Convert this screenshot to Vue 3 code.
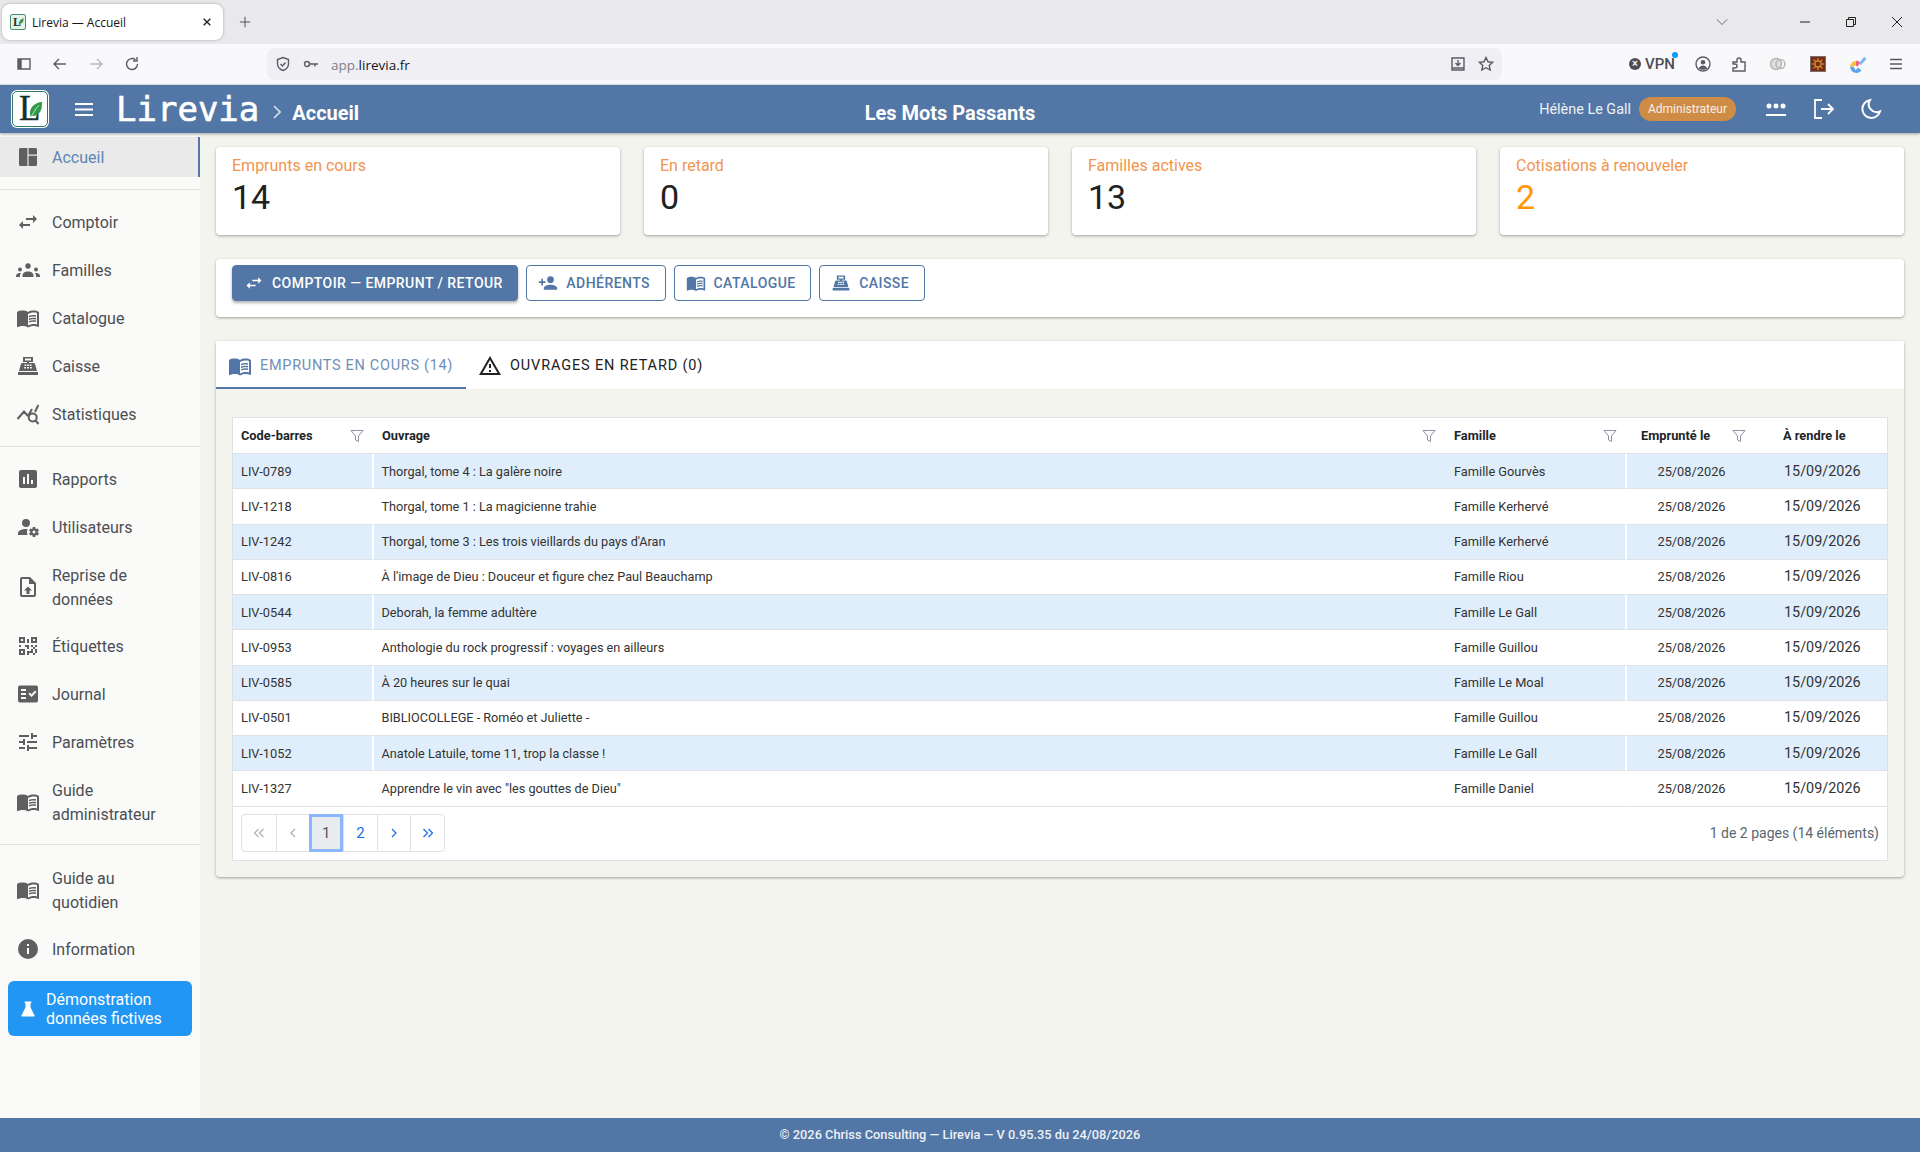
<template>
  <div class="page">
    <div class="tabstrip">
      <div class="tab">
        <span class="favicon"><b>L</b><svg viewBox="0 0 20 24"><path d="M2 23C2 12 8 3 19 1c1 10-3 18-12 19l-3 3z" /></svg></span>
        <span class="tab-title">Lirevia — Accueil</span>
        <svg class="tab-close" viewBox="0 0 12 12"><path d="M2 2l8 8M10 2l-8 8" /></svg>
      </div>
      <svg class="new-tab" viewBox="0 0 14 14"><path d="M7 1v12M1 7h12" /></svg>
      <div class="strip-right">
        <svg class="win chev" viewBox="0 0 14 14"><path d="M1 4l6 6 6-6" /></svg>
        <svg class="win" viewBox="0 0 12 12"><path d="M1 6h10" /></svg>
        <svg class="win" viewBox="0 0 12 12"><path d="M1.5 3.5h7v7h-7zM3.5 3.5v-2h7v7h-2" /></svg>
        <svg class="win" viewBox="0 0 12 12"><path d="M1 1l10 10M11 1L1 11" /></svg>
      </div>
    </div>

    <div class="toolbar">
      <svg class="tool" viewBox="0 0 16 16"><path d="M2 3h12v10H2zM5 3v10" /><path class="solid" d="M2 3h3v10H2z" /></svg>
      <svg class="tool" viewBox="0 0 16 16"><path d="M14 8H2M7 3L2 8l5 5" /></svg>
      <svg class="tool faint" viewBox="0 0 16 16"><path d="M2 8h12M9 3l5 5-5 5" /></svg>
      <svg class="tool" viewBox="0 0 16 16"><path d="M13.5 8A5.5 5.5 0 1 1 11.5 3.8M13 1v4H9" /></svg>
      <div class="urlbar">
        <svg class="tool" viewBox="0 0 16 16"><path d="M8 1.5l5.5 2v4c0 3.5-2.5 6-5.5 7-3-1-5.500-3.500-5.500-7v-4zM5.500 8l2 2 3-3.500" /></svg>
        <svg class="tool key" viewBox="0 0 16 16"><circle cx="4" cy="8" r="2.500" /><path d="M6.500 8H15M12 8v2.500" /></svg>
        <span class="url"><i>app.</i>lirevia.fr</span>
        <span class="url-fill"></span>
        <svg class="tool" viewBox="0 0 16 16"><path d="M2 12V2h12v10zM2 12v2h12v-2M8 4v5M5.500 7L8 9.500 10.500 7" /></svg>
        <svg class="tool star" viewBox="0 0 16 16"><path d="M8 1.500l2 4.300 4.600.5-3.400 3.100 1 4.600L8 11.700l-4.200 2.300 1-4.600L1.400 6.300 6 5.800z" /></svg>
      </div>
      <div class="vpn">
        <span class="vpn-dot">×</span><span>VPN</span><span class="vpn-badge"></span>
      </div>
      <svg class="tool ext" viewBox="0 0 16 16"><circle cx="8" cy="8" r="7" /><circle cx="8" cy="6.200" r="2.300" class="solid" /><path class="solid" d="M3.800 12.500c.8-2 2.400-3 4.200-3s3.400 1 4.200 3c-2 1.800-6.400 1.800-8.400 0z" /></svg>
      <svg class="tool ext puzzle" viewBox="0 0 16 16"><path d="M2 6h4V4a2 2 0 0 1 4 0v2h4v9H2v-3h2a2 2 0 0 0 0-4H2z" /></svg>
      <svg class="tool ext pale" viewBox="0 0 16 16"><circle class="solid" cx="6" cy="8" r="5.500" /><circle cx="6" cy="8" r="5.500" /><circle cx="10.500" cy="8" r="4.500" /></svg>
      <span class="brown"><svg viewBox="0 0 16 16"><circle cx="8" cy="8" r="3.500" /><path d="M8 1v3M8 12v3M1 8h3M12 8h3M3 3l2 2M11 11l2 2M13 3l-2 2M5 11l-2 2" /></svg></span>
      <svg class="colorful" viewBox="0 0 16 16">
        <path fill="#f6c445" d="M1 10.500a5.500 5.500 0 0 1 5.500-5.500L7 8l-3 2.500z" />
        <path fill="#ee5d7c" d="M6.500 5c1.500 0 2.500.5 3.500 1.500L8 10l-2-.5z" />
        <path fill="#5aa9ec" d="M1 10.500A5.500 5.500 0 0 0 6.500 16c2 0 3.500-1 4.500-2.500L8 11l-2 2.500-2-3z" />
        <path fill="#7db7f0" d="M9 7l4.500-5.500 2 2L10.500 9z" />
      </svg>
      <svg class="tool ext menu" viewBox="0 0 16 16"><path d="M2 3.500h12M2 8h12M2 12.500h12" /></svg>
    </div>

    <header class="appbar">
      <div class="brand">
        <span class="logo">
          <b>L</b>
          <svg class="leaf" viewBox="0 0 20 24"><path d="M3 22C0 12 6 3 19 1c1 11-3 20-13 20z" /><path class="vein" d="M4 22C8 15 11 10 15 6" /></svg>
        </span>
        <svg class="burger" viewBox="0 0 18 13"><path d="M0 1h18M0 6.500h18M0 12h18" /></svg>
        <span class="wordmark">Lirevia</span>
        <svg class="crumb" viewBox="0 0 8 14"><path d="M1 1l6 6-6 6" /></svg>
        <span class="page-name">Accueil</span>
      </div>
      <div class="org">Les Mots Passants</div>
      <div class="user">
        <span class="user-name">Hélène Le Gall</span>
        <span class="role">Administrateur</span>
        <svg class="bar-icon pass" viewBox="0 0 22 16"><g><circle cx="4" cy="5" r="2.500" /><circle cx="11" cy="5" r="2.500" /><circle cx="18" cy="5" r="2.500" /></g><path d="M1 14h20" /></svg>
        <svg class="bar-icon out" viewBox="0 0 22 22"><path d="M9 2H2v18h7M8 11h12M15 6l5 5-5 5" /></svg>
        <svg class="bar-icon moon" viewBox="0 0 22 22"><path d="M10 2a9 9 0 1 0 10 11.500A8 8 0 0 1 10 2z" /></svg>
      </div>
    </header>

    <div class="body">
      <aside class="sidebar">
        <template v-for="item in nav" :key="item.label">
          <div v-if="item.sep" class="sep" :class="item.sep"></div>
          <div class="nav-item" :class="{ active: item.active, wrap: item.label.length > 16 }">
            <svg class="nav-icon" :class="{ stroked: item.icon === 'stats' }" viewBox="0 0 24 24"><path :d="icons[item.icon]" fill-rule="evenodd" /></svg>
            <span>{{ item.label }}</span>
          </div>
        </template>
        <div class="demo">
          <svg viewBox="0 0 24 24"><path d="M8 3h8v2h-1v5l5 10a1 1 0 0 1-1 1H5a1 1 0 0 1-1-1l5-10V5H8z" /></svg>
          <span>Démonstration<br />données fictives</span>
        </div>
      </aside>

      <main class="main">
        <section class="cards">
          <div v-for="c in cards" :key="c.label" class="card">
            <div class="card-label">{{ c.label }}</div>
            <div class="card-value" :class="{ warn: c.warn }">{{ c.value }}</div>
          </div>
        </section>

        <section class="actions">
          <button class="btn primary"><svg viewBox="0 0 24 24"><path :d="icons.swap" /></svg>Comptoir — Emprunt / Retour</button>
          <button class="btn"><svg viewBox="0 0 24 24"><path :d="icons.adduser" /></svg>Adhérents</button>
          <button class="btn"><svg viewBox="0 0 24 24"><path :d="icons.book" /></svg>Catalogue</button>
          <button class="btn"><svg viewBox="0 0 24 24"><path :d="icons.cash" /></svg>Caisse</button>
        </section>

        <section class="panel">
          <div class="tabs">
            <div class="tabitem current"><svg viewBox="0 0 24 24"><path :d="icons.book" /></svg>Emprunts en cours (14)</div>
            <div class="tabitem"><svg viewBox="0 0 24 24"><path :d="icons.alert" /></svg>Ouvrages en retard (0)</div>
          </div>

          <div class="table-wrap">
            <table>
              <colgroup>
                <col class="c1" />
                <col class="c2" />
                <col class="c3" />
                <col class="c4" />
                <col />
              </colgroup>
              <thead>
                <tr>
                  <th v-for="h in headers" :key="h.label" :class="h.cls">
                    <div class="th-in">
                      <span>{{ h.label }}</span>
                      <svg v-if="h.filter" class="funnel" viewBox="0 0 14 14"><path d="M1 1.500h12L8.500 7v5.500l-3-1.500V7z" /></svg>
                    </div>
                  </th>
                </tr>
              </thead>
              <tbody>
                <tr v-for="r in rows" :key="r[0]">
                  <td class="sep-r">{{ r[0] }}</td>
                  <td class="title">{{ r[1] }}</td>
                  <td class="sep-r">{{ r[2] }}</td>
                  <td class="date">25/08/2026</td>
                  <td class="due">15/09/2026</td>
                </tr>
              </tbody>
            </table>
            <div class="pager-row">
              <div class="pager">
                <span class="pg off"><svg viewBox="0 0 12 10"><path d="M5.500 1L1.500 5l4 4M10.500 1L6.500 5l4 4" /></svg></span>
                <span class="pg off"><svg viewBox="0 0 12 10"><path d="M8 1L4 5l4 4" /></svg></span>
                <span class="pg on">1</span>
                <span class="pg">2</span>
                <span class="pg"><svg viewBox="0 0 12 10"><path d="M4 1l4 4-4 4" /></svg></span>
                <span class="pg"><svg viewBox="0 0 12 10"><path d="M1.500 1l4 4-4 4M6.500 1l4 4-4 4" /></svg></span>
              </div>
              <span class="pager-info">1 de 2 pages (14 éléments)</span>
            </div>
          </div>
        </section>
      </main>
    </div>

    <footer class="footer">© 2026 Chriss Consulting — Lirevia — V 0.95.35 du 24/08/2026</footer>
  </div>
</template>

<script setup>
const book = 'M21,5C19.89,4.65 18.67,4.5 17.5,4.5C15.55,4.5 13.45,4.9 12,6C10.55,4.9 8.45,4.5 6.5,4.5C4.55,4.5 2.45,4.9 1,6V20.65C1,20.9 1.25,21.15 1.5,21.15C1.6,21.15 1.65,21.1 1.75,21.1C3.1,20.45 5.05,20 6.5,20C8.45,20 10.55,20.4 12,21.5C13.35,20.65 15.8,20 17.5,20C19.15,20 20.85,20.3 22.25,21.05C22.35,21.1 22.4,21.1 22.5,21.1C22.75,21.1 23,20.85 23,20.6V6C22.4,5.55 21.75,5.25 21,5M21,18.5C19.9,18.15 18.7,18 17.5,18C15.8,18 13.35,18.65 12,19.5V8C13.35,7.15 15.8,6.5 17.5,6.5C18.7,6.5 19.9,6.65 21,7V18.5ZM17.5,10.5C18.38,10.5 19.23,10.59 20,10.76V9.24C19.21,9.09 18.36,9 17.5,9C15.8,9 14.26,9.29 13,9.83V11.49C14.13,10.85 15.7,10.5 17.5,10.5M13,12.49V14.15C14.13,13.51 15.7,13.16 17.5,13.16C18.38,13.16 19.23,13.25 20,13.42V11.9C19.21,11.75 18.36,11.66 17.5,11.66C15.8,11.66 14.26,11.96 13,12.49M17.5,14.33C15.8,14.33 14.26,14.62 13,15.16V16.82C14.13,16.18 15.7,15.83 17.5,15.83C18.38,15.83 19.23,15.92 20,16.09V14.57C19.21,14.41 18.36,14.33 17.5,14.33Z'

const icons = {
  book,
  dash: 'M3 4.500A1.500 1.500 0 0 1 4.500 3H11.400v18H4.500A1.500 1.500 0 0 1 3 19.500zM12.600 3h6.900A1.500 1.500 0 0 1 21 4.500V9.500h-8.400zM12.600 10.700H21v8.800a1.500 1.500 0 0 1-1.500 1.500H12.600z',
  swap: 'M21,9L17,5V8H10V10H17V13M7,11L3,15L7,19V16H14V14H7V11Z',
  group: 'M12 5.300a2.700 2.700 0 1 1 0 5.400a2.700 2.700 0 0 1 0-5.400zM4 9.500a2 2 0 1 1 0 4a2 2 0 0 1 0-4zM20 9.500a2 2 0 1 1 0 4a2 2 0 0 1 0-4zM6.500 19v-1.500c0-2.500 2.500-4 5.500-4s5.500 1.500 5.500 4V19zM0 19v-1c0-1.800 1.800-3 4-3 .4 0 .8 0 1.100.1-.7.8-1.100 1.800-1.100 2.900V19zM24 19v-1c0-1.800-1.800-3-4-3-.4 0-.8 0-1.100.1.700.8 1.100 1.800 1.100 2.900V19z',
  cash: 'M7 3h10v5h-4v1h4.500c.8 0 1.400.5 1.600 1.200L21 17H3l1.900-6.800C5.100 9.500 5.700 9 6.500 9H11V8H7zM9 4.500v2h6v-2zM2 18h20v3H2zM8.500 10.500v1.500h1.800v-1.500zM11.100 10.500v1.500h1.800v-1.500zM13.700 10.500v1.500h1.800v-1.500zM8.200 13v1.500h1.800V13zM11.100 13v1.500h1.800V13zM14 13v1.500h1.800V13z',
  stats: 'M1.500 17l6.500-7.500 4 4.500M12 14l4-7M19 10l3.300-7M16.700 11.500a4 4 0 1 0 0 8a4 4 0 0 0 0-8zM19.500 18.500l3 3.500',
  chart: 'M19,3H5C3.9,3 3,3.9 3,5V19C3,20.1 3.9,21 5,21H19C20.1,21 21,20.1 21,19V5C21,3.9 20.1,3 19,3M9,17H7V10H9V17M13,17H11V7H13V17M17,17H15V13H17V17Z',
  usercog: 'M10 4A4 4 0 0 0 6 8A4 4 0 0 0 10 12A4 4 0 0 0 14 8A4 4 0 0 0 10 4M17 12C16.87 12 16.76 12.09 16.74 12.21L16.55 13.53C16.25 13.66 15.96 13.82 15.7 14L14.46 13.5C14.35 13.5 14.22 13.5 14.15 13.63L13.15 15.36C13.09 15.47 13.11 15.6 13.21 15.68L14.27 16.5C14.25 16.67 14.24 16.83 14.24 17C14.24 17.17 14.25 17.33 14.27 17.5L13.21 18.32C13.12 18.4 13.09 18.53 13.15 18.64L14.15 20.37C14.21 20.5 14.34 20.5 14.46 20.5L15.7 20C15.96 20.18 16.24 20.35 16.55 20.47L16.74 21.79C16.76 21.91 16.86 22 17 22H19C19.11 22 19.22 21.91 19.24 21.79L19.43 20.47C19.73 20.34 20 20.18 20.27 20L21.5 20.5C21.63 20.5 21.76 20.5 21.83 20.37L22.83 18.64C22.89 18.53 22.86 18.4 22.77 18.32L21.7 17.5C21.72 17.33 21.74 17.17 21.74 17C21.74 16.83 21.73 16.67 21.7 16.5L22.76 15.68C22.85 15.6 22.88 15.47 22.82 15.36L21.82 13.63C21.76 13.5 21.63 13.5 21.5 13.5L20.27 14C20 13.82 19.73 13.65 19.42 13.53L19.23 12.21C19.22 12.09 19.11 12 19 12H17M10 14C5.58 14 2 15.79 2 18V20H11.68A7 7 0 0 1 11 17A7 7 0 0 1 11.64 14.09C11.11 14.03 10.56 14 10 14M18 15.5C18.83 15.5 19.5 16.17 19.5 17C19.5 17.83 18.83 18.5 18 18.5C17.16 18.5 16.5 17.83 16.5 17C16.5 16.17 17.17 15.5 18 15.5Z',
  upload: 'M14,2H6A2,2 0 0,0 4,4V20A2,2 0 0,0 6,22H18A2,2 0 0,0 20,20V8L14,2M18,20H6V4H13V9H18V20ZM12,11.500L16,15.500H13.500V19H10.500V15.500H8Z',
  qr: 'M3,11H5V13H3V11M11,5H13V9H11V5M9,11H13V15H11V13H9V11M15,11H17V13H19V11H21V13H19V15H21V19H19V21H17V19H13V21H11V17H15V15H17V13H15V11M19,19V15H17V19H19M15,3H21V9H15V3M17,5V7H19V5H17M3,3H9V9H3V3M5,5V7H7V5H5M3,15H9V21H3V15M5,17V19H7V17H5Z',
  journal: 'M4 3.500h16a2 2 0 0 1 2 2v13a2 2 0 0 1-2 2H4a2 2 0 0 1-2-2v-13a2 2 0 0 1 2-2zM5 7v2h5V7zM5 11v2h5v-2zM5 15v2h5v-2zM12.500 12l1.400-1.400 1.600 1.600 3.600-3.600 1.400 1.400-5 5z',
  tune: 'M3,17V19H9V17H3M3,5V7H13V5H3M13,21V19H21V17H13V15H11V21H13M7,9V11H3V13H7V15H9V9H7M21,13V11H11V13H21M15,9H17V7H21V5H17V3H15V9Z',
  info: 'M12,2A10,10 0 0,0 2,12A10,10 0 0,0 12,22A10,10 0 0,0 22,12A10,10 0 0,0 12,2ZM13,9H11V7H13ZM13,17H11V11H13Z',
  adduser: 'M15,14C12.33,14 7,15.33 7,18V20H23V18C23,15.33 17.67,14 15,14M6,10V7H4V10H1V12H4V15H6V12H9V10M15,12A4,4 0 0,0 19,8A4,4 0 0,0 15,4A4,4 0 0,0 11,8A4,4 0 0,0 15,12Z',
  alert: 'M12,2L1,21H23M12,6L19.53,19H4.47M11,10V14H13V10M11,16V18H13V16',
}

const nav = [
  { label: 'Accueil', icon: 'dash', active: true },
  { label: 'Comptoir', icon: 'swap', sep: 'first' },
  { label: 'Familles', icon: 'group' },
  { label: 'Catalogue', icon: 'book' },
  { label: 'Caisse', icon: 'cash' },
  { label: 'Statistiques', icon: 'stats' },
  { label: 'Rapports', icon: 'chart', sep: 'mid' },
  { label: 'Utilisateurs', icon: 'usercog' },
  { label: 'Reprise de données', icon: 'upload' },
  { label: 'Étiquettes', icon: 'qr' },
  { label: 'Journal', icon: 'journal' },
  { label: 'Paramètres', icon: 'tune' },
  { label: 'Guide administrateur', icon: 'book' },
  { label: 'Guide au quotidien', icon: 'book', sep: 'last' },
  { label: 'Information', icon: 'info' },
]

const cards = [
  { label: 'Emprunts en cours', value: 14 },
  { label: 'En retard', value: 0 },
  { label: 'Familles actives', value: 13 },
  { label: 'Cotisations à renouveler', value: 2, warn: true },
]

const headers = [
  { label: 'Code-barres', filter: true },
  { label: 'Ouvrage', filter: true },
  { label: 'Famille', filter: true },
  { label: 'Emprunté le', filter: true, cls: 'h-date' },
  { label: 'À rendre le' },
]

const rows = [
  ['LIV-0789', 'Thorgal, tome 4 : La galère noire', 'Famille Gourvès'],
  ['LIV-1218', 'Thorgal, tome 1 : La magicienne trahie', 'Famille Kerhervé'],
  ['LIV-1242', "Thorgal, tome 3 : Les trois vieillards du pays d'Aran", 'Famille Kerhervé'],
  ['LIV-0816', "À l'image de Dieu : Douceur et figure chez Paul Beauchamp", 'Famille Riou'],
  ['LIV-0544', 'Deborah, la femme adultère', 'Famille Le Gall'],
  ['LIV-0953', 'Anthologie du rock progressif : voyages en ailleurs', 'Famille Guillou'],
  ['LIV-0585', 'À 20 heures sur le quai', 'Famille Le Moal'],
  ['LIV-0501', 'BIBLIOCOLLEGE - Roméo et Juliette -', 'Famille Guillou'],
  ['LIV-1052', 'Anatole Latuile, tome 11, trop la classe !', 'Famille Le Gall'],
  ['LIV-1327', 'Apprendre le vin avec "les gouttes de Dieu"', 'Famille Daniel'],
]
</script>

<style>
html, body {
  margin: 0;
  background: #f4f4ef;
}
</style>

<style scoped>
.page {
  height: 1152px;
  display: flex;
  flex-direction: column;
  font-family: Roboto, "Liberation Sans", sans-serif;
  color: #333;
  overflow: hidden;
}

/* browser chrome */
.tabstrip {
  height: 44px;
  flex: none;
  background: #e9e9ec;
  display: flex;
  align-items: center;
  padding-left: 2px;
  box-sizing: border-box;
}
.tab {
  width: 221px;
  height: 36px;
  background: #fff;
  border-radius: 8px;
  box-shadow: 0 0 3px rgba(0, 0, 0, .3);
  display: flex;
  align-items: center;
  padding: 0 11px 0 8px;
  box-sizing: border-box;
}
.favicon {
  position: relative;
  width: 14px;
  height: 14px;
  border: 1px solid #4f8f78;
  border-radius: 2px;
  background: #e7f1ec;
  font: bold 12px/14px "Liberation Serif", serif;
  color: #123d2d;
  flex: none;
}
.favicon b {
  margin-left: 2px;
}
.favicon svg {
  position: absolute;
  right: 1px;
  top: 3px;
  width: 6px;
  height: 7px;
  fill: #3c9a4a;
}
.tab-title {
  flex: 1;
  margin-left: 6px;
  font: 12px "Open Sans", sans-serif;
  color: #15141a;
}
.tab-close {
  width: 10px;
  height: 10px;
  fill: none;
  stroke: #222;
  stroke-width: 1.6;
}
.new-tab {
  width: 12px;
  height: 12px;
  margin-left: 16px;
  fill: none;
  stroke: #55555b;
  stroke-width: 1.2;
}
.strip-right {
  margin-left: auto;
  display: flex;
  align-items: center;
  padding-right: 17px;
  gap: 34px;
}
.win {
  width: 12px;
  height: 12px;
  fill: none;
  stroke: #222;
  stroke-width: 1;
}
.win.chev {
  stroke: #55555b;
  margin-right: 37px;
}
.toolbar {
  height: 40px;
  flex: none;
  background: #f9f9fb;
  border-bottom: 1px solid #e6e6e8;
  display: flex;
  align-items: center;
  padding-left: 16px;
}
.tool {
  width: 16px;
  height: 16px;
  flex: none;
  fill: none;
  stroke: #5b5b66;
  stroke-width: 1.4;
  margin-right: 20px;
}
.tool .solid {
  fill: #5b5b66;
  stroke: none;
}
.tool.faint {
  stroke: #b8b8bf;
}
.urlbar {
  width: 1235px;
  height: 32px;
  background: #f0f0f4;
  border-radius: 8px;
  display: flex;
  align-items: center;
  padding-left: 8px;
  margin-left: 107px;
  box-sizing: border-box;
  flex: none;
}
.urlbar .tool {
  margin-right: 12px;
}
.urlbar .tool.star {
  margin-right: 8px;
}
.url {
  font: 13.5px "Open Sans", sans-serif;
  color: #15141a;
  padding-top: 2px;
}
.url i {
  font-style: normal;
  color: #7e7e85;
}
.url-fill {
  flex: 1;
}
.vpn {
  position: relative;
  display: flex;
  align-items: center;
  flex: none;
  margin-left: 127px;
  font: 500 15px Roboto, sans-serif;
  color: #4c4c55;
  width: 66px;
  gap: 4px;
}
.vpn-dot {
  width: 12px;
  height: 12px;
  border-radius: 50%;
  background: #4c4c55;
  color: #fff;
  font: bold 10px/12px "Liberation Sans", sans-serif;
  text-align: center;
}
.vpn-badge {
  position: absolute;
  left: 43px;
  top: -3px;
  width: 6px;
  height: 6px;
  border-radius: 50%;
  background: #0a9bf5;
}
.tool.puzzle {
  margin-right: 21px;
}
.tool.pale {
  stroke: #b5b5b5;
  margin-left: 1.5px;
  margin-right: 24px;
}
.tool.pale .solid {
  fill: #dddddd;
}
.brown {
  width: 14px;
  height: 14px;
  background: #7a2a10;
  border: 1px solid #77706c;
  margin-right: 23px;
  flex: none;
}
.brown svg {
  display: block;
  fill: none;
  stroke: #d89a3a;
  stroke-width: 1.3;
}
.colorful {
  width: 18px;
  height: 18px;
  margin-right: 21px;
  flex: none;
}

/* app bar */
.appbar {
  height: 48px;
  flex: none;
  background: #5276a5;
  box-shadow: 0 1px 3px rgba(0, 0, 0, .35);
  display: grid;
  grid-template-columns: 764px 348px 1fr;
  align-items: center;
  padding-left: 12px;
  color: #fff;
  position: relative;
  z-index: 2;
}
.brand {
  display: flex;
  align-items: center;
}
.logo {
  position: relative;
  width: 34px;
  height: 34px;
  background: #fff;
  border: 1px solid #2a7a62;
  border-radius: 5px;
  box-shadow: 0 0 0 1px #fff;
  flex: none;
  color: #12332b;
}
.logo b {
  position: absolute;
  left: 6px;
  top: 0;
  font: 400 35px/34px "Liberation Serif", serif;
  -webkit-text-stroke: .4px #12332b;
}
.leaf {
  position: absolute;
  left: 15px;
  top: 9px;
  width: 15px;
  height: 17px;
  fill: #2e9b4a;
}
.leaf .vein {
  fill: none;
  stroke: #fff;
  stroke-width: 1;
}
.burger {
  width: 18px;
  height: 13px;
  margin-left: 27px;
  fill: none;
  stroke: #fff;
  stroke-width: 2;
  flex: none;
}
.wordmark {
  margin-left: 23px;
  font: 400 34px/1 "DejaVu Sans Mono", monospace;
  -webkit-text-stroke: .6px #fff;
}
.crumb {
  width: 8px;
  height: 14px;
  margin: 5px 11px 0 14px;
  fill: none;
  stroke: #d6dfeb;
  stroke-width: 1.6;
}
.page-name {
  font-size: 20px;
  font-weight: 700;
  margin-top: 7px;
}
.org {
  text-align: center;
  font-size: 20px;
  font-weight: 700;
  margin-top: 7px;
}
.user {
  display: flex;
  align-items: center;
  justify-content: flex-end;
  padding-right: 38px;
}
.user-name {
  font-size: 14.4px;
  color: #eef1f6;
}
.role {
  margin-left: 8px;
  height: 24px;
  padding: 0 9px;
  border-radius: 12px;
  background: #cf8c47;
  font-size: 12px;
  line-height: 24px;
  color: #f7f1e8;
}
.bar-icon {
  flex: none;
  fill: none;
  stroke: #fff;
  stroke-width: 2;
}
.pass {
  width: 22px;
  height: 16px;
  margin-left: 29px;
}
.pass g {
  fill: #fff;
  stroke: none;
}
.out {
  width: 22px;
  height: 22px;
  margin-left: 26px;
  stroke-width: 1.8;
}
.moon {
  width: 22px;
  height: 22px;
  margin-left: 25px;
}

/* layout */
.body {
  flex: 1;
  display: flex;
  min-height: 0;
}
.sidebar {
  width: 200px;
  flex: none;
  box-sizing: border-box;
  background: #fafaf8;
  box-shadow: 1px 0 0 #ecece8;
  padding-top: 4px;
}
.nav-item {
  height: 48px;
  display: flex;
  align-items: center;
  padding-left: 16px;
  font-size: 16px;
  line-height: 24px;
  color: #4b4f55;
}
.nav-item.wrap {
  height: 71px;
}
.nav-item span {
  width: 120px;
  padding-top: 2px;
}
.nav-icon {
  width: 24px;
  height: 24px;
  fill: #5f5f5f;
  margin-right: 12px;
  flex: none;
}
.nav-icon.stroked {
  fill: none;
  stroke: #5f5f5f;
  stroke-width: 2;
}
.nav-item.active {
  height: 40px;
  background: #eaeaea;
  border-right: 2px solid #5276a5;
  color: #5b87b5;
  margin-bottom: 12px;
}
.sep {
  height: 1px;
  background: #e2e2e0;
  margin: 8px 0;
}
.sep.first {
  margin-top: 0;
}
.sep.last {
  margin: 7px 0 9px;
}
.demo {
  margin: 8px 8px 0;
  height: 55px;
  border-radius: 6px;
  background: #2196f3;
  color: #fff;
  display: flex;
  align-items: center;
  padding-left: 10px;
  font-size: 16px;
  line-height: 19px;
}
.demo svg {
  width: 20px;
  height: 20px;
  fill: #fff;
  margin-right: 8px;
  flex: none;
}
.main {
  flex: 1;
  padding: 14px 16px 0;
  min-width: 0;
  background: #f4f4ef;
}
.cards {
  display: grid;
  grid-template-columns: repeat(4, 1fr);
  gap: 24px;
}
.card {
  height: 88px;
  box-sizing: border-box;
  background: #fff;
  border-radius: 4px;
  box-shadow: 0 1px 3px rgba(0, 0, 0, .35);
  padding: 9px 16px 8px;
}
.card-label {
  font-size: 16px;
  line-height: 20px;
  color: #f0954f;
}
.card-value {
  font-size: 34px;
  line-height: 40px;
  margin-top: 1px;
  color: #212121;
}
.card-value.warn {
  color: #ff9800;
}
.actions {
  margin-top: 24px;
  background: #fff;
  border-radius: 4px;
  box-shadow: 0 1px 3px rgba(0, 0, 0, .35);
  padding: 6px 16px 16px;
  display: flex;
  gap: 8px;
}
.btn {
  height: 36px;
  box-sizing: border-box;
  border: 1px solid #5276a5;
  border-radius: 4px;
  background: #fff;
  color: #5276a5;
  font: 500 14px Roboto, sans-serif;
  letter-spacing: .45px;
  text-transform: uppercase;
  padding: 0 14.5px 0 11px;
  display: flex;
  align-items: center;
}
.btn svg {
  width: 20px;
  height: 20px;
  fill: currentColor;
  fill-rule: evenodd;
  margin-right: 8px;
}
.btn.primary {
  background: #5276a5;
  color: #fff;
  box-shadow: 0 2px 3px rgba(0, 0, 0, .3);
}
.panel {
  margin-top: 24px;
  border-radius: 4px;
  box-shadow: 0 1px 3px rgba(0, 0, 0, .35);
  padding-bottom: 16px;
}
.tabs {
  height: 48px;
  background: #fff;
  display: flex;
}
.tabitem {
  display: flex;
  align-items: center;
  padding: 1px 12px 0;
  font-size: 14.5px;
  letter-spacing: .85px;
  text-transform: uppercase;
  color: #222;
  box-sizing: border-box;
}
.tabitem svg {
  width: 24px;
  height: 24px;
  fill: #222;
  margin-right: 8px;
}
.tabitem.current {
  color: #6f8fb5;
  letter-spacing: .7px;
  padding-top: 3px;
  border-bottom: 2px solid #5276a5;
  width: 250px;
}
.tabitem.current svg {
  fill: #5276a5;
}
.table-wrap {
  margin: 28px 16px 0;
  background: #fff;
  border: 1px solid #dee2e6;
}
table {
  width: 100%;
  table-layout: fixed;
  border-collapse: separate;
  border-spacing: 0;
}
.c1 { width: 141px; }
.c2 { width: 1072px; }
.c3 { width: 181px; }
.c4 { width: 148px; }
th {
  height: 35px;
  padding: 0 10.5px 0 8px;
  border-bottom: 1px solid #dee2e6;
  font-size: 12.8px;
  font-weight: 700;
  text-align: left;
  color: #212529;
}
.th-in {
  display: flex;
  align-items: center;
  justify-content: space-between;
}
.h-date {
  padding: 0 29px 0 14px;
}
.funnel {
  width: 14px;
  height: 14px;
  fill: none;
  stroke: #8a93a3;
  stroke-width: 1;
}
td {
  height: 34.25px;
  padding: 0 8px;
  border-bottom: 1px solid #dee2e6;
  font-size: 12.8px;
  color: #333;
  white-space: nowrap;
}
tbody tr:nth-child(odd) td {
  background: #e0eefb;
}
td.sep-r {
  border-right: 2px solid transparent;
}
tbody tr:nth-child(odd) td.sep-r {
  border-right-color: #fff;
}
td.title {
  font-size: 12.7px;
  padding-left: 7.5px;
}
td.date {
  text-align: center;
  padding-right: 27px;
}
td.due {
  font-size: 14.4px;
  padding-left: 9px;
}
.pager-row {
  height: 53px;
  display: flex;
  align-items: center;
  justify-content: space-between;
  padding: 0 8px;
}
.pager {
  display: flex;
  border: 1px solid #dee2e6;
  border-radius: 4px;
  height: 38px;
  box-sizing: border-box;
}
.pg {
  width: 33.7px;
  box-sizing: border-box;
  border-left: 1px solid #dee2e6;
  display: flex;
  align-items: center;
  justify-content: center;
  color: #1a6cf0;
  font-size: 15px;
}
.pg:first-child {
  border-left: none;
}
.pg svg {
  width: 12px;
  height: 10px;
  fill: none;
  stroke: currentColor;
  stroke-width: 1.2;
}
.pg.off {
  color: #aab0b7;
}
.pg.on {
  background: #e9ecef;
  border: 3px solid #8bb6fb;
  color: #555;
  margin: -1px 0;
  height: 38px;
}
.pager-info {
  font-size: 14px;
  color: #5a6570;
}
.footer {
  height: 34px;
  flex: none;
  background: #5276a5;
  color: #eef1f6;
  font-size: 12.8px;
  font-weight: 500;
  line-height: 34px;
  text-align: center;
}
</style>
